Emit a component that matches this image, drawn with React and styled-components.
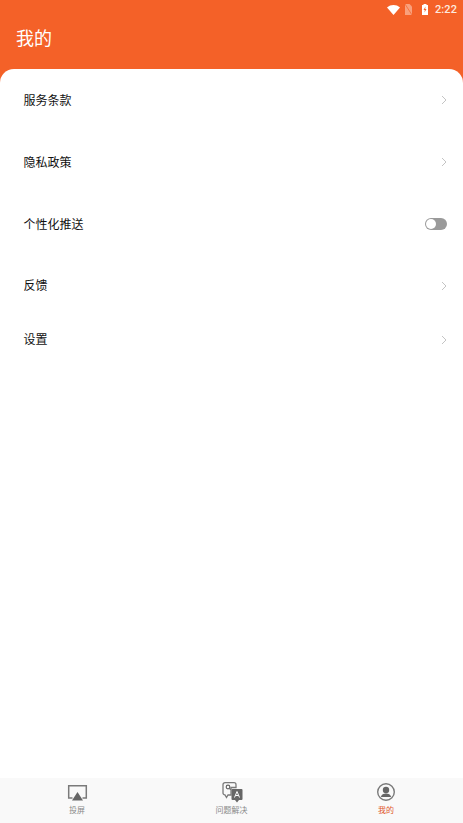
import React from "react";
import styled, { createGlobalStyle } from "styled-components";

const Global = createGlobalStyle`
  html, body { margin: 0; padding: 0; height: 100%; background: #fff; overflow: hidden; }
  #root { height: 100%; }
  * { box-sizing: border-box; }
`;
const Screen = styled.div`
  width: 463px; height: 823px; display: flex; flex-direction: column; background: #f46128;
  font-family: "Roboto", "Noto Sans CJK SC", sans-serif;
`;
const StatusBar = styled.div`
  height: 20px; flex: none; display: flex; align-items: center; justify-content: flex-end;
  padding: 0 6px 1px 0; color: #fff;
`;
const StatusIcon = styled.svg`
  display: block; flex: none; margin-right: ${p => p.$gap}px;
`;
const Clock = styled.span`
  font-size: 11px; line-height: 16px; color: #fde9df; font-weight: 500; letter-spacing: .1px;
`;
const Header = styled.div`
  height: 49px; flex: none; padding: 6px 0 0 16px;
`;
const Title = styled.h1`
  margin: 0; font-size: 18px; line-height: 26px; font-weight: 400; color: #fff;
`;
const Content = styled.div`
  flex: 1; background: #fff; border-radius: 14px 14px 0 0; display: flex; flex-direction: column;
`;
const Row = styled.div`
  height: ${p => p.$h}px; flex: none; display: flex; align-items: center; justify-content: space-between;
  padding: 0 16px 0 23.5px;
`;
const Label = styled.span`
  font-size: 12px; line-height: 18px; color: #111; padding-top: 1px;
`;
const Toggle = styled.div`
  width: 22px; height: 12px; border-radius: 6px; background: #9a9a9a; display: flex; align-items: center; padding-left: 1px; margin-bottom: 1px;
`;
const Knob = styled.div`
  width: 10px; height: 10px; border-radius: 50%; background: #fff;
`;
const Chevron = styled.svg`
  width: 6px; height: 10px; display: block;
`;
const TabBar = styled.div`
  height: 45px; flex: none; background: #f9f9f9; display: grid; grid-template-columns: 154px 155px 154px;
`;
const Tab = styled.div`
  display: flex; flex-direction: column; align-items: center; padding-top: 3px;
`;
const TabIcon = styled.svg`
  width: 22px; height: 22px; display: block;
`;
const TabLabel = styled.span`
  font-size: 8px; line-height: 11px; margin-top: 2px; color: ${p => (p.$active ? "#e0562a" : "#8a8a8a")};
`;

const Arrow = () => (
  <Chevron viewBox="0 0 6 10"><path d="M1 1l4 4-4 4" fill="none" stroke="#c4c4c4" strokeWidth="1" /></Chevron>
);

const rows = [
  { t: "服务条款", h: 62 },
  { t: "隐私政策", h: 62 },
  { t: "个性化推送", h: 62, toggle: true },
  { t: "反馈", h: 61 },
  { t: "设置", h: 47 },
];

export default function App() {
  return (
    <Screen>
      <Global />
      <StatusBar>
        <StatusIcon $gap={5} width="13" height="10" viewBox="0 0 13 10"><path d="M0 2.500C3.600-.8 9.400-.8 13 2.500L6.500 10z" fill="#fff" /></StatusIcon>
        <StatusIcon $gap={10} width="7" height="11" viewBox="0 0 7 11"><path d="M0 0h4.500L7 2.500V11H0z" fill="#f9a07c" /><path d="M0 0l7 11" stroke="#f46128" strokeWidth=".7" /></StatusIcon>
        <StatusIcon $gap={7} width="6" height="11" viewBox="0 0 6 11"><path d="M1.500 0h3v1H6v10H0V1h1.500z" fill="#fff" /><path d="M3.500 2.500L1.500 6h1.300L2.500 8.500 4.500 5H3.200z" fill="#f46128" /></StatusIcon>
        <Clock>2:22</Clock>
      </StatusBar>
      <Header><Title>我的</Title></Header>
      <Content>
        {rows.map(r => (
          <Row key={r.t} $h={r.h}>
            <Label>{r.t}</Label>
            {r.toggle ? <Toggle><Knob /></Toggle> : <Arrow />}
          </Row>
        ))}
      </Content>
      <TabBar>
        <Tab>
          <TabIcon viewBox="0 0 22 22">
            <path d="M6.500 17H2.700V4.700h17.600V17h-3.800" fill="none" stroke="#7a7a7a" strokeWidth="1.500" />
            <path d="M11.500 11l5.500 8.500H6z" fill="#666" />
          </TabIcon>
          <TabLabel>投屏</TabLabel>
        </Tab>
        <Tab>
          <TabIcon viewBox="0 0 22 22">
            <path d="M4 1.700h9a2 2 0 0 1 2 2V6.500h-5V14H7l-1.500 2.500L4 14a2 2 0 0 1-2-2V3.700a2 2 0 0 1 2-2z" fill="none" stroke="#7a7a7a" strokeWidth="1.300" />
            <circle cx="7" cy="6" r="1.800" fill="none" stroke="#666" strokeWidth="1.200" />
            <path d="M8.500 7.500l1.200 1.200" stroke="#666" strokeWidth="1.200" />
            <path d="M11.500 8h9a1 1 0 0 1 1 1v9a1 1 0 0 1-1 1h-2.500L16 21.500 14 19h-2.500a1 1 0 0 1-1-1V9a1 1 0 0 1 1-1z" fill="#666" />
            <path d="M13.500 16.500l2.500-6 2.500 6M14.500 14.500h3" fill="none" stroke="#fff" strokeWidth="1" />
          </TabIcon>
          <TabLabel>问题解决</TabLabel>
        </Tab>
        <Tab>
          <TabIcon viewBox="0 0 22 22">
            <circle cx="11" cy="11" r="8.300" fill="none" stroke="#7a7a7a" strokeWidth="1.400" />
            <circle cx="11" cy="9" r="3.200" fill="#666" />
            <path d="M5.800 16c.5-2.500 2.800-3.500 5.200-3.500s4.700 1 5.200 3.500z" fill="#666" />
          </TabIcon>
          <TabLabel $active>我的</TabLabel>
        </Tab>
      </TabBar>
    </Screen>
  );
}
